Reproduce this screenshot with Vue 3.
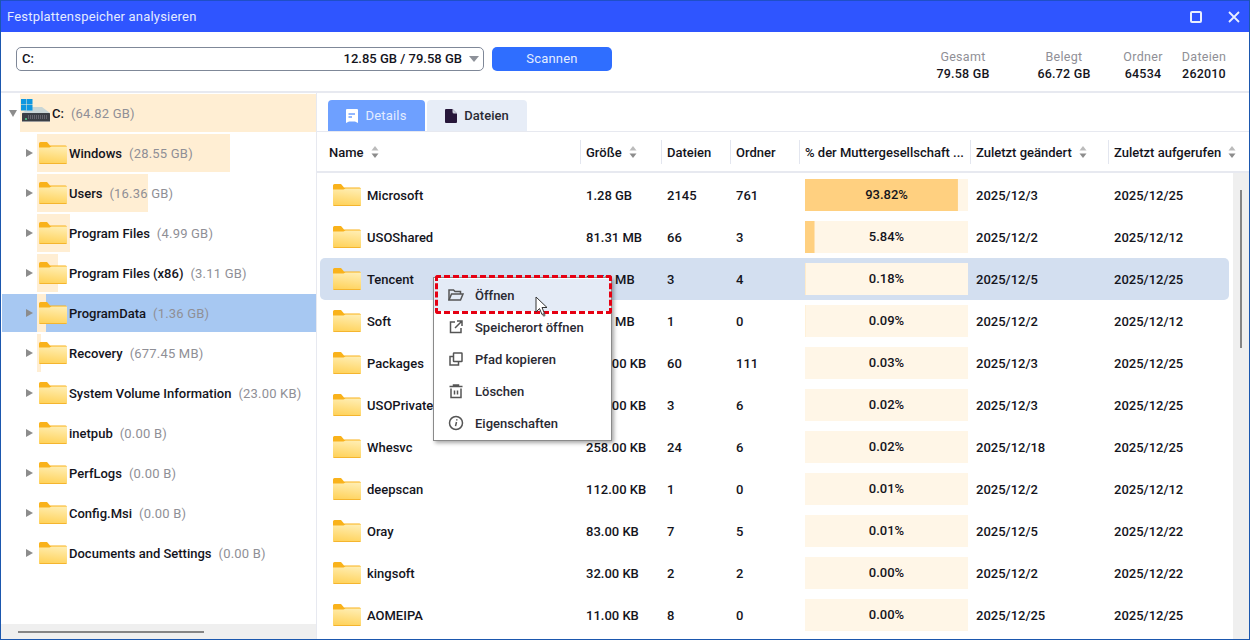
<script setup>
const tree = [
  { name: 'Windows', size: '(28.55 GB)', w: 193 },
  { name: 'Users', size: '(16.36 GB)', w: 111 },
  { name: 'Program Files', size: '(4.99 GB)', w: 33 },
  { name: 'Program Files (x86)', size: '(3.11 GB)', w: 21 },
  { name: 'ProgramData', size: '(1.36 GB)', w: 9, selected: true },
  { name: 'Recovery', size: '(677.45 MB)', w: 4 },
  { name: 'System Volume Information', size: '(23.00 KB)', w: 0 },
  { name: 'inetpub', size: '(0.00 B)', w: 0 },
  { name: 'PerfLogs', size: '(0.00 B)', w: 0 },
  { name: 'Config.Msi', size: '(0.00 B)', w: 0 },
  { name: 'Documents and Settings', size: '(0.00 B)', w: 0 },
]
const columns = [
  { label: 'Name', sort: true },
  { label: 'Größe', sort: true },
  { label: 'Dateien' },
  { label: 'Ordner' },
  { label: '% der Muttergesellschaft ...' },
  { label: 'Zuletzt geändert', sort: true },
  { label: 'Zuletzt aufgerufen', sort: true },
]
const rows = [
  ['Microsoft', '1.28 GB', '2145', '761', 93.82, '2025/12/3', '2025/12/25'],
  ['USOShared', '81.31 MB', '66', '3', 5.84, '2025/12/2', '2025/12/12'],
  ['Tencent', '2.50 MB', '3', '4', 0.18, '2025/12/5', '2025/12/25', true],
  ['Soft', '1.25 MB', '1', '0', 0.09, '2025/12/2', '2025/12/12'],
  ['Packages', '400.00 KB', '60', '111', 0.03, '2025/12/3', '2025/12/25'],
  ['USOPrivate', '300.00 KB', '3', '6', 0.02, '2025/12/3', '2025/12/25'],
  ['Whesvc', '258.00 KB', '24', '6', 0.02, '2025/12/18', '2025/12/25'],
  ['deepscan', '112.00 KB', '1', '0', 0.01, '2025/12/2', '2025/12/12'],
  ['Oray', '83.00 KB', '7', '5', 0.01, '2025/12/5', '2025/12/22'],
  ['kingsoft', '32.00 KB', '2', '2', 0.0, '2025/12/2', '2025/12/22'],
  ['AOMEIPA', '11.00 KB', '8', '0', 0.0, '2025/12/25', '2025/12/25'],
]
const stats = [
  ['Gesamt', '79.58 GB'],
  ['Belegt', '66.72 GB'],
  ['Ordner', '64534'],
  ['Dateien', '262010'],
]
const menu = ['Öffnen', 'Speicherort öffnen', 'Pfad kopieren', 'Löschen', 'Eigenschaften']
</script>

<template>
  <div class="window">
    <svg width="0" height="0" class="defs">
      <defs>
        <linearGradient id="fg" x1="0.6" y1="0" x2="0.4" y2="1">
          <stop offset="0" stop-color="#ffedb0" />
          <stop offset="1" stop-color="#ffd25a" />
        </linearGradient>
        <symbol id="folder" viewBox="0 0 28 22">
          <path d="M0 1.500A1.500 1.500 0 0 1 1.500 0H8l3 3.500h15.500A1.500 1.500 0 0 1 28 5v3H0z" fill="#f9b21b" />
          <path d="M0 5.500h10.500l2-1H28V20.500a1.500 1.500 0 0 1-1.500 1.500H1.500A1.500 1.500 0 0 1 0 20.500z" fill="url(#fg)" />
          <rect x="0.500" y="21" width="27" height="1" fill="#f5b52e" />
        </symbol>
        <symbol id="sort" viewBox="0 0 8 14">
          <path d="M4 1l3.500 4.500h-7z" fill="#bbb" />
          <path d="M4 13L.5 8.500h7z" fill="#8c8c8c" />
        </symbol>
      </defs>
    </svg>

    <header class="titlebar">
      <span class="title">Festplattenspeicher analysieren</span>
      <div class="win-btns">
        <svg width="12" height="12" viewBox="0 0 12 12"><rect x="1" y="1" width="10" height="10" rx="1" fill="none" stroke="#e8efff" stroke-width="2" /></svg>
        <svg width="12" height="12" viewBox="0 0 12 12"><path d="M1 1l10 10M11 1L1 11" stroke="#e8efff" stroke-width="1.800" /></svg>
      </div>
    </header>

    <section class="toolbar">
      <div class="combo">
        <span>C:</span>
        <span class="combo-right">12.85 GB / 79.58 GB</span>
        <i class="combo-caret"></i>
      </div>
      <button class="scan">Scannen</button>
      <div class="stats">
        <div v-for="s in stats" :key="s[0]" class="stat">
          <div class="stat-label">{{ s[0] }}</div>
          <div class="stat-value">{{ s[1] }}</div>
        </div>
      </div>
    </section>

    <main class="main">
      <aside class="side">
        <div class="tree">
          <div class="tree-row root">
            <i class="arrow-down"></i>
            <div class="tree-fill root-fill">
              <span class="drive">
                <svg width="30" height="28" viewBox="0 0 30 28">
                  <path d="M10 8h11l8 6H1z" fill="#c9d6d6" />
                  <rect x="1" y="14" width="28" height="9" rx="0.500" fill="#3b3f45" />
                  <path d="M7 17h20M7 19h20" stroke="#8f8a96" stroke-width="1" stroke-dasharray="1 1" />
                  <rect x="4" y="19" width="2" height="2" fill="#4caf7a" />
                  <rect x="1" y="22" width="28" height="1" fill="#9a9a9a" />
                  <rect y="0" width="5.500" height="5.500" fill="#0f97e0" />
                  <rect x="6" y="0" width="5.500" height="5.500" fill="#0f97e0" />
                  <rect y="6" width="5.500" height="5.500" fill="#0f97e0" />
                  <rect x="6" y="6" width="5.500" height="5.500" fill="#0f97e0" />
                </svg>
              </span>
              <span class="tree-name">C:</span>
              <span class="tree-size">(64.82 GB)</span>
            </div>
          </div>
          <div v-for="t in tree" :key="t.name" class="tree-row" :class="{ selected: t.selected }">
            <i class="arrow-right"></i>
            <div class="tree-fill" :style="{ backgroundSize: t.w + 'px 100%' }">
              <svg class="folder" width="28" height="22"><use href="#folder" /></svg>
              <span class="tree-name">{{ t.name }}</span>
              <span class="tree-size">{{ t.size }}</span>
            </div>
          </div>
        </div>
        <div class="hscroll"><div class="hthumb"></div></div>
      </aside>

      <section class="content">
        <nav class="tabs">
          <div class="tab active">
            <svg width="12" height="14" viewBox="0 0 12 14"><path d="M1 0h10a1 1 0 0 1 1 1v13l-3-1.500H3L0 14V1a1 1 0 0 1 1-1z" fill="#fff" /><path d="M2.500 5H9M2.500 8H6" stroke="#6fa0ff" stroke-width="1.300" /></svg>
            <span>Details</span>
          </div>
          <div class="tab">
            <svg width="12" height="14" viewBox="0 0 12 14"><path d="M1 0h6.500L12 4.500V13a1 1 0 0 1-1 1H1a1 1 0 0 1-1-1V1a1 1 0 0 1 1-1z" fill="#27173a" /><path d="M7.500 0v3a1.500 1.500 0 0 0 1.500 1.500h3z" fill="#cfd3de" /></svg>
            <span>Dateien</span>
          </div>
        </nav>

        <div class="thead">
          <div v-for="c in columns" :key="c.label" class="th">
            <span>{{ c.label }}</span>
            <svg v-if="c.sort" class="sort" width="8" height="14"><use href="#sort" /></svg>
          </div>
        </div>

        <div class="tbody-wrap">
          <div class="tbody">
            <div v-for="r in rows" :key="r[0]" class="tr" :class="{ hi: r[7] }">
              <div class="td name">
                <svg width="28" height="22"><use href="#folder" /></svg>
                <span>{{ r[0] }}</span>
              </div>
              <div class="td">{{ r[1] }}</div>
              <div class="td">{{ r[2] }}</div>
              <div class="td">{{ r[3] }}</div>
              <div class="td pct-cell">
                <div class="pct" :style="{ backgroundSize: r[4] + '% 100%' }">{{ r[4].toFixed(2) }}%</div>
              </div>
              <div class="td">{{ r[5] }}</div>
              <div class="td">{{ r[6] }}</div>
            </div>
          </div>
          <div class="vscroll"><div class="vthumb"></div></div>
        </div>
      </section>
    </main>

    <div class="menu">
      <div v-for="(m, i) in menu" :key="m" class="menu-item" :class="{ first: i === 0 }">
        <svg width="16" height="16" viewBox="0 0 16 16" fill="none" stroke="#555" stroke-width="1.500">
          <template v-if="i === 0">
            <path d="M1 13V3h4.500l1.500 1.500h5.500V7" />
            <path d="M1 13l2.500-6H15l-2.500 6z" />
          </template>
          <template v-else-if="i === 1">
            <path d="M7 3H2.500v10.500H13V9" />
            <path d="M7 9l6.500-6.500M9 2h5v5" />
          </template>
          <template v-else-if="i === 2">
            <rect x="5.500" y="2" width="8.500" height="8.500" rx="0.500" />
            <path d="M5.500 5.500H2V14h8.500v-3.500" />
          </template>
          <template v-else-if="i === 3">
            <path d="M1.500 3.500h13M5.500 3.500V2h5v1.500" />
            <path d="M3 5.500v9h10v-9M6.500 7.500v4M9.500 7.500v4" />
          </template>
          <template v-else>
            <circle cx="8" cy="8" r="6.500" />
            <path d="M8.500 7l-1 4.200M8.800 4.300v1.200" />
          </template>
        </svg>
        <span>{{ m }}</span>
      </div>
    </div>
    <div class="dash"></div>
    <svg class="cursor" width="14" height="22" viewBox="0 0 14 22">
      <path d="M1 1v15l3.500-3.500 2.500 6 2.500-1-2.500-6H12z" fill="#fff" stroke="#333" stroke-width="1" />
      <circle cx="9" cy="19" r="1.500" fill="#777" />
    </svg>
  </div>
</template>

<style>
html, body { margin: 0; padding: 0; overflow: hidden; }
</style>

<style scoped>
.window {
  position: relative;
  width: 1250px;
  height: 640px;
  box-sizing: border-box;
  display: flex;
  flex-direction: column;
  background: #fff;
  border: 1px solid #1b57ae;
  border-top: 0;
  overflow: hidden;
  font-family: Roboto, "Liberation Sans", sans-serif;
  font-size: 13px;
  font-weight: 500;
  color: #14141c;
}
.defs { position: absolute; }
.titlebar {
  height: 32px;
  flex: none;
  box-sizing: border-box;
  display: flex;
  align-items: center;
  justify-content: space-between;
  background: #2f55ff;
  border-top: 1px solid #1f4fc8;
  padding: 0 9px 0 6px;
  color: #e3ebff;
}
.title { font-weight: 400; letter-spacing: 0.2px; }
.win-btns { display: flex; gap: 26px; }
.win-btns svg { display: block; }
.toolbar {
  height: 61px;
  flex: none;
  box-sizing: border-box;
  display: flex;
  align-items: center;
  padding: 0 21px 6px 15px;
  border-bottom: 2px solid #e7e9f0;
}
.combo {
  width: 468px;
  height: 24px;
  box-sizing: border-box;
  border: 1px solid #7f8898;
  border-radius: 5px;
  display: flex;
  align-items: center;
  padding: 0 4px 0 5px;
}
.combo-right { margin-left: auto; }
.combo-caret {
  width: 0; height: 0;
  margin-left: 7px;
  border-left: 5px solid transparent;
  border-right: 5px solid transparent;
  border-top: 6px solid #8d9199;
}
.scan {
  width: 120px;
  height: 24px;
  margin-left: 8px;
  border: 0;
  border-radius: 5px;
  background: #2f6eff;
  color: #e3ecff;
  font: inherit;
  font-weight: 400;
  letter-spacing: 0.2px;
}
.stats {
  margin-left: auto;
  margin-top: 12px;
  display: grid;
  grid-template-columns: 118px 84px 74px 48px;
  text-align: center;
}
.stat { white-space: nowrap; display: flex; flex-direction: column; align-items: center; gap: 2px; }
.stat-label { color: #8f8f96; font-size: 12.500px; font-weight: 400; letter-spacing: 0.3px; line-height: 15px; }
.stat-value { font-size: 12.500px; letter-spacing: 0.2px; line-height: 15px; }
.main { flex: 1; display: flex; min-height: 0; }
.side {
  width: 316px;
  flex: none;
  box-sizing: border-box;
  border-right: 1px solid #e7e9f0;
  display: flex;
  flex-direction: column;
}
.tree { flex: 1; padding: 1px 0 0 1px; min-height: 0; }
.tree-row {
  height: 38px;
  margin-bottom: 2px;
  display: flex;
  align-items: center;
}
.tree-row.selected { background: #a7c8f2; }
.arrow-right {
  width: 0; height: 0;
  margin-left: 24px;
  margin-right: 4px;
  flex: none;
  border-top: 4.500px solid transparent;
  border-bottom: 4.500px solid transparent;
  border-left: 7px solid #8c8c8c;
}
.arrow-down {
  width: 0; height: 0;
  margin-left: 7px;
  margin-right: 3px;
  flex: none;
  border-left: 4.500px solid transparent;
  border-right: 4.500px solid transparent;
  border-top: 7px solid #8c8c8c;
}
.tree-fill {
  flex: 1;
  height: 100%;
  display: flex;
  align-items: center;
  padding-left: 2px;
  white-space: nowrap;
  background-image: linear-gradient(#ffeed3, #ffeed3);
  background-repeat: no-repeat;
}
.root-fill { padding-left: 1px; }
.drive { display: flex; height: 28px; margin-right: 1px; }
.folder { flex: none; margin-right: 2px; }
.tree-size { color: #8f8f96; font-weight: 400; margin-left: 7px; letter-spacing: 0.2px; }
.hscroll { height: 15px; flex: none; background: #efefef; padding: 7px 0 0 17px; box-sizing: border-box; }
.hthumb { width: 186px; height: 2px; background: #858585; }
.content { flex: 1; min-width: 0; display: flex; flex-direction: column; }
.tabs {
  height: 39px;
  flex: none;
  box-sizing: border-box;
  padding: 7px 0 0 11px;
  display: flex;
  gap: 2px;
  border-bottom: 1px solid #e7e9f0;
}
.tab {
  width: 100px;
  height: 31px;
  display: flex;
  align-items: center;
  justify-content: center;
  gap: 7px;
  background: #e7edf7;
  border-radius: 4px 4px 0 0;
  color: #2a2a33;
}
.tab.active { width: 97px; background: #6ea0ff; color: #e3ecff; font-weight: 400; letter-spacing: 0.2px; }
.thead {
  height: 41px;
  flex: none;
  box-sizing: border-box;
  padding: 1px 0 0 3px;
  display: grid;
  grid-template-columns: 260px 81px 69px 69px 171px 138px 121px;
  align-items: center;
  border-bottom: 2px solid #e7e9f0;
}
.th {
  height: 24px;
  display: flex;
  align-items: center;
  gap: 6px;
  padding-left: 5px;
  border-left: 1px solid #e3e6ef;
  white-space: nowrap;
}
.th:first-child { border-left: 0; padding-left: 9px; }
.sort { flex: none; margin-left: 1px; }
.tbody-wrap { flex: 1; min-height: 0; display: flex; }
.tbody { flex: 1; min-width: 0; overflow: hidden; padding: 1px 4px 0 3px; }
.tr {
  height: 42px;
  border-radius: 5px;
  display: grid;
  grid-template-columns: 261px 81px 69px 69px 171px 138px 120px;
  align-items: center;
}
.tr.hi { background: #d3dff0; }
.td { padding-left: 5px; white-space: nowrap; }
.td.name { display: flex; align-items: center; gap: 6px; padding-left: 13px; }
.td.pct-cell { padding-left: 5px; }
.pct {
  width: 163px;
  height: 32px;
  line-height: 32px;
  text-align: center;
  background-color: #fff6e7;
  background-image: linear-gradient(#ffd080, #ffd080);
  background-repeat: no-repeat;
}
.vscroll { width: 16px; flex: none; background: #efefef; padding: 17px 0 0 7px; box-sizing: border-box; }
.vthumb { width: 2px; height: 158px; background: #858585; }
.menu {
  position: absolute;
  left: 432px;
  top: 277px;
  width: 179px;
  height: 164px;
  box-sizing: border-box;
  background: #fff;
  border: 1px solid #8a8a8a;
  box-shadow: 2px 2px 4px rgba(0, 0, 0, 0.35);
  padding-top: 1px;
}
.menu-item {
  height: 32px;
  display: flex;
  align-items: center;
  gap: 11px;
  padding-left: 14px;
  color: #2a2a33;
}
.menu-item.first { background: #e4ebf6; }
.dash {
  position: absolute;
  left: 434px;
  top: 275px;
  width: 177px;
  height: 39px;
  box-sizing: border-box;
  border: 3px dashed #e60012;
  border-radius: 3px;
}
.cursor { position: absolute; left: 534px; top: 296px; }
</style>
